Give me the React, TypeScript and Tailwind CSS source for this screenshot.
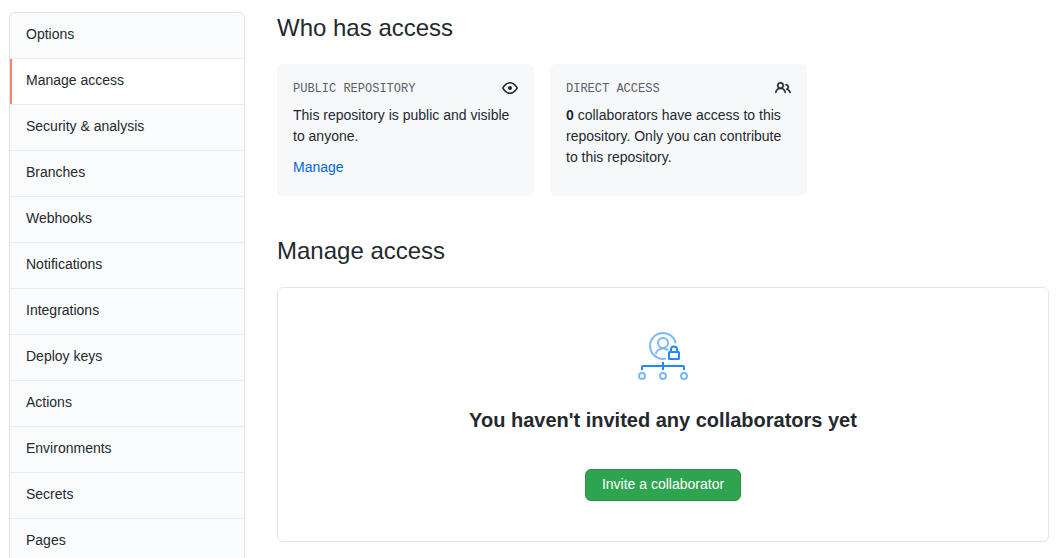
import React from "react";

const menuItems = [
  "Options",
  "Manage access",
  "Security & analysis",
  "Branches",
  "Webhooks",
  "Notifications",
  "Integrations",
  "Deploy keys",
  "Actions",
  "Environments",
  "Secrets",
  "Pages",
];

function EyeIcon() {
  return (
    <svg width="16" height="16" viewBox="0 0 16 16" fill="currentColor" fillRule="evenodd" aria-hidden="true">
      <path d="M1.679 7.932c.412-.621 1.242-1.75 2.366-2.717C5.175 4.242 6.527 3.5 8 3.5c1.473 0 2.824.742 3.955 1.715 1.124.967 1.954 2.096 2.366 2.717a.119.119 0 010 .136c-.412.621-1.242 1.75-2.366 2.717C10.825 11.758 9.473 12.5 8 12.5c-1.473 0-2.824-.742-3.955-1.715C2.92 9.818 2.09 8.69 1.679 8.068a.119.119 0 010-.136zM8 2c-1.981 0-3.67.992-4.933 2.078C1.797 5.169.88 6.423.43 7.1a1.619 1.619 0 000 1.798c.45.678 1.367 1.932 2.637 3.024C4.329 13.008 6.019 14 8 14c1.981 0 3.67-.992 4.933-2.078 1.27-1.091 2.187-2.345 2.637-3.023a1.619 1.619 0 000-1.798c-.45-.678-1.367-1.932-2.637-3.023C11.671 2.992 9.981 2 8 2zm0 8a2 2 0 100-4 2 2 0 000 4z" />
    </svg>
  );
}

function PeopleIcon() {
  return (
    <svg width="16" height="16" viewBox="0 0 16 16" fill="currentColor" stroke="currentColor" strokeWidth="0.3" fillRule="evenodd" aria-hidden="true">
      <path d="M5.5 3.5a2 2 0 100 4 2 2 0 000-4zM2 5.5a3.5 3.5 0 115.898 2.549 5.507 5.507 0 013.034 4.084.75.75 0 11-1.482.235 4.001 4.001 0 00-7.9 0 .75.75 0 01-1.482-.236A5.507 5.507 0 013.102 8.05 3.49 3.49 0 012 5.5zM11 4a.75.75 0 100 1.5 1.5 1.5 0 01.666 2.844.75.75 0 00-.416.672v.352a.75.75 0 00.574.73c1.2.289 2.162 1.2 2.522 2.372a.75.75 0 101.434-.44 5.01 5.01 0 00-2.56-3.012A3 3 0 0011 4z" />
    </svg>
  );
}

function CollaboratorsIllustration() {
  return (
    <svg width="50" height="50" viewBox="0 0 50 50" fill="none" strokeWidth="2" aria-hidden="true">
      <g stroke="#79b8ff">
        <path d="M37.8 12.4A13 13 0 1 0 28 27.6" />
        <circle cx="25" cy="12" r="5" />
        <path d="M17.6 23.2C18.6 19.4 21.4 17.4 25 17.4c2 0 3.8.6 5.2 1.8" />
        <circle cx="4" cy="45" r="3" />
        <circle cx="25" cy="45" r="3" />
        <circle cx="46" cy="45" r="3" />
      </g>
      <g stroke="#2188ff">
        <rect x="31" y="21" width="10" height="7" rx="0.5" />
        <path d="M33 21v-2.6a3 3 0 0 1 6 0V21" />
        <path d="M4 39v-3a1 1 0 0 1 1-1h40a1 1 0 0 1 1 1v3M25 31v8" />
      </g>
    </svg>
  );
}

function AccessCard({ title, icon, children }: { title: string; icon: React.ReactNode; children: React.ReactNode }) {
  return (
    <section className="min-h-33 flex-1 rounded-md bg-[#f6f8fa] p-4">
      <div className="mb-2 flex items-start justify-between">
        <h3 className="pt-px font-['Liberation_Mono',monospace] text-xs leading-4 text-[#586069] uppercase">
          {title}
        </h3>
        {icon}
      </div>
      {children}
    </section>
  );
}

export default function App() {
  return (
    <div className="flex h-screen gap-8 overflow-hidden bg-white pr-3.5 pl-[9px] font-['Liberation_Sans',Arial,sans-serif] text-sm leading-[21px] text-[#24292e]">
      <nav aria-label="Repository settings" className="w-59 shrink-0 pt-3">
        <ul className="overflow-hidden rounded-md border border-[#e1e4e8] bg-[#fafbfc]">
          {menuItems.map((item) => {
            const active = item === "Manage access";
            return (
              <li key={item} className="border-b border-[#eaecef] last:border-b-0">
                <a
                  href="#"
                  aria-current={active ? "page" : undefined}
                  className={
                    active
                      ? "block border-l-2 border-[#f9826c] bg-white pt-[11px] pr-4 pb-[13px] pl-3.5"
                      : "block px-4 pt-[11px] pb-[13px]"
                  }
                >
                  {item}
                </a>
              </li>
            );
          })}
        </ul>
      </nav>

      <main className="min-w-0 flex-1 pt-2.5">
        <h2 className="text-2xl leading-9">Who has access</h2>
        <div className="mt-[18px] flex max-w-[530px] gap-4">
          <AccessCard title="Public repository" icon={<EyeIcon />}>
            <p className="mb-2.5">This repository is public and visible to anyone.</p>
            <a href="#" className="block text-[#0366d6]">
              Manage
            </a>
          </AccessCard>
          <AccessCard title="Direct access" icon={<PeopleIcon />}>
            <p>
              <strong>0</strong> collaborators have access to this repository. Only you can contribute to this
              repository.
            </p>
          </AccessCard>
        </div>

        <h2 className="mt-[37px] text-2xl leading-9">Manage access</h2>
        <section className="mt-[18px] flex flex-col items-center rounded-md border border-[#e1e4e8] px-10 pt-[43px] pb-10">
          <CollaboratorsIllustration />
          <h3 className="mt-6 text-xl leading-[30px] font-bold">You haven&apos;t invited any collaborators yet</h3>
          <button
            type="button"
            className="mt-[34px] h-8 rounded-md border border-[#2a8f47] bg-[#2ea44f] px-4 pb-0.5 text-sm leading-5 text-white"
          >
            Invite a collaborator
          </button>
        </section>
      </main>
    </div>
  );
}
